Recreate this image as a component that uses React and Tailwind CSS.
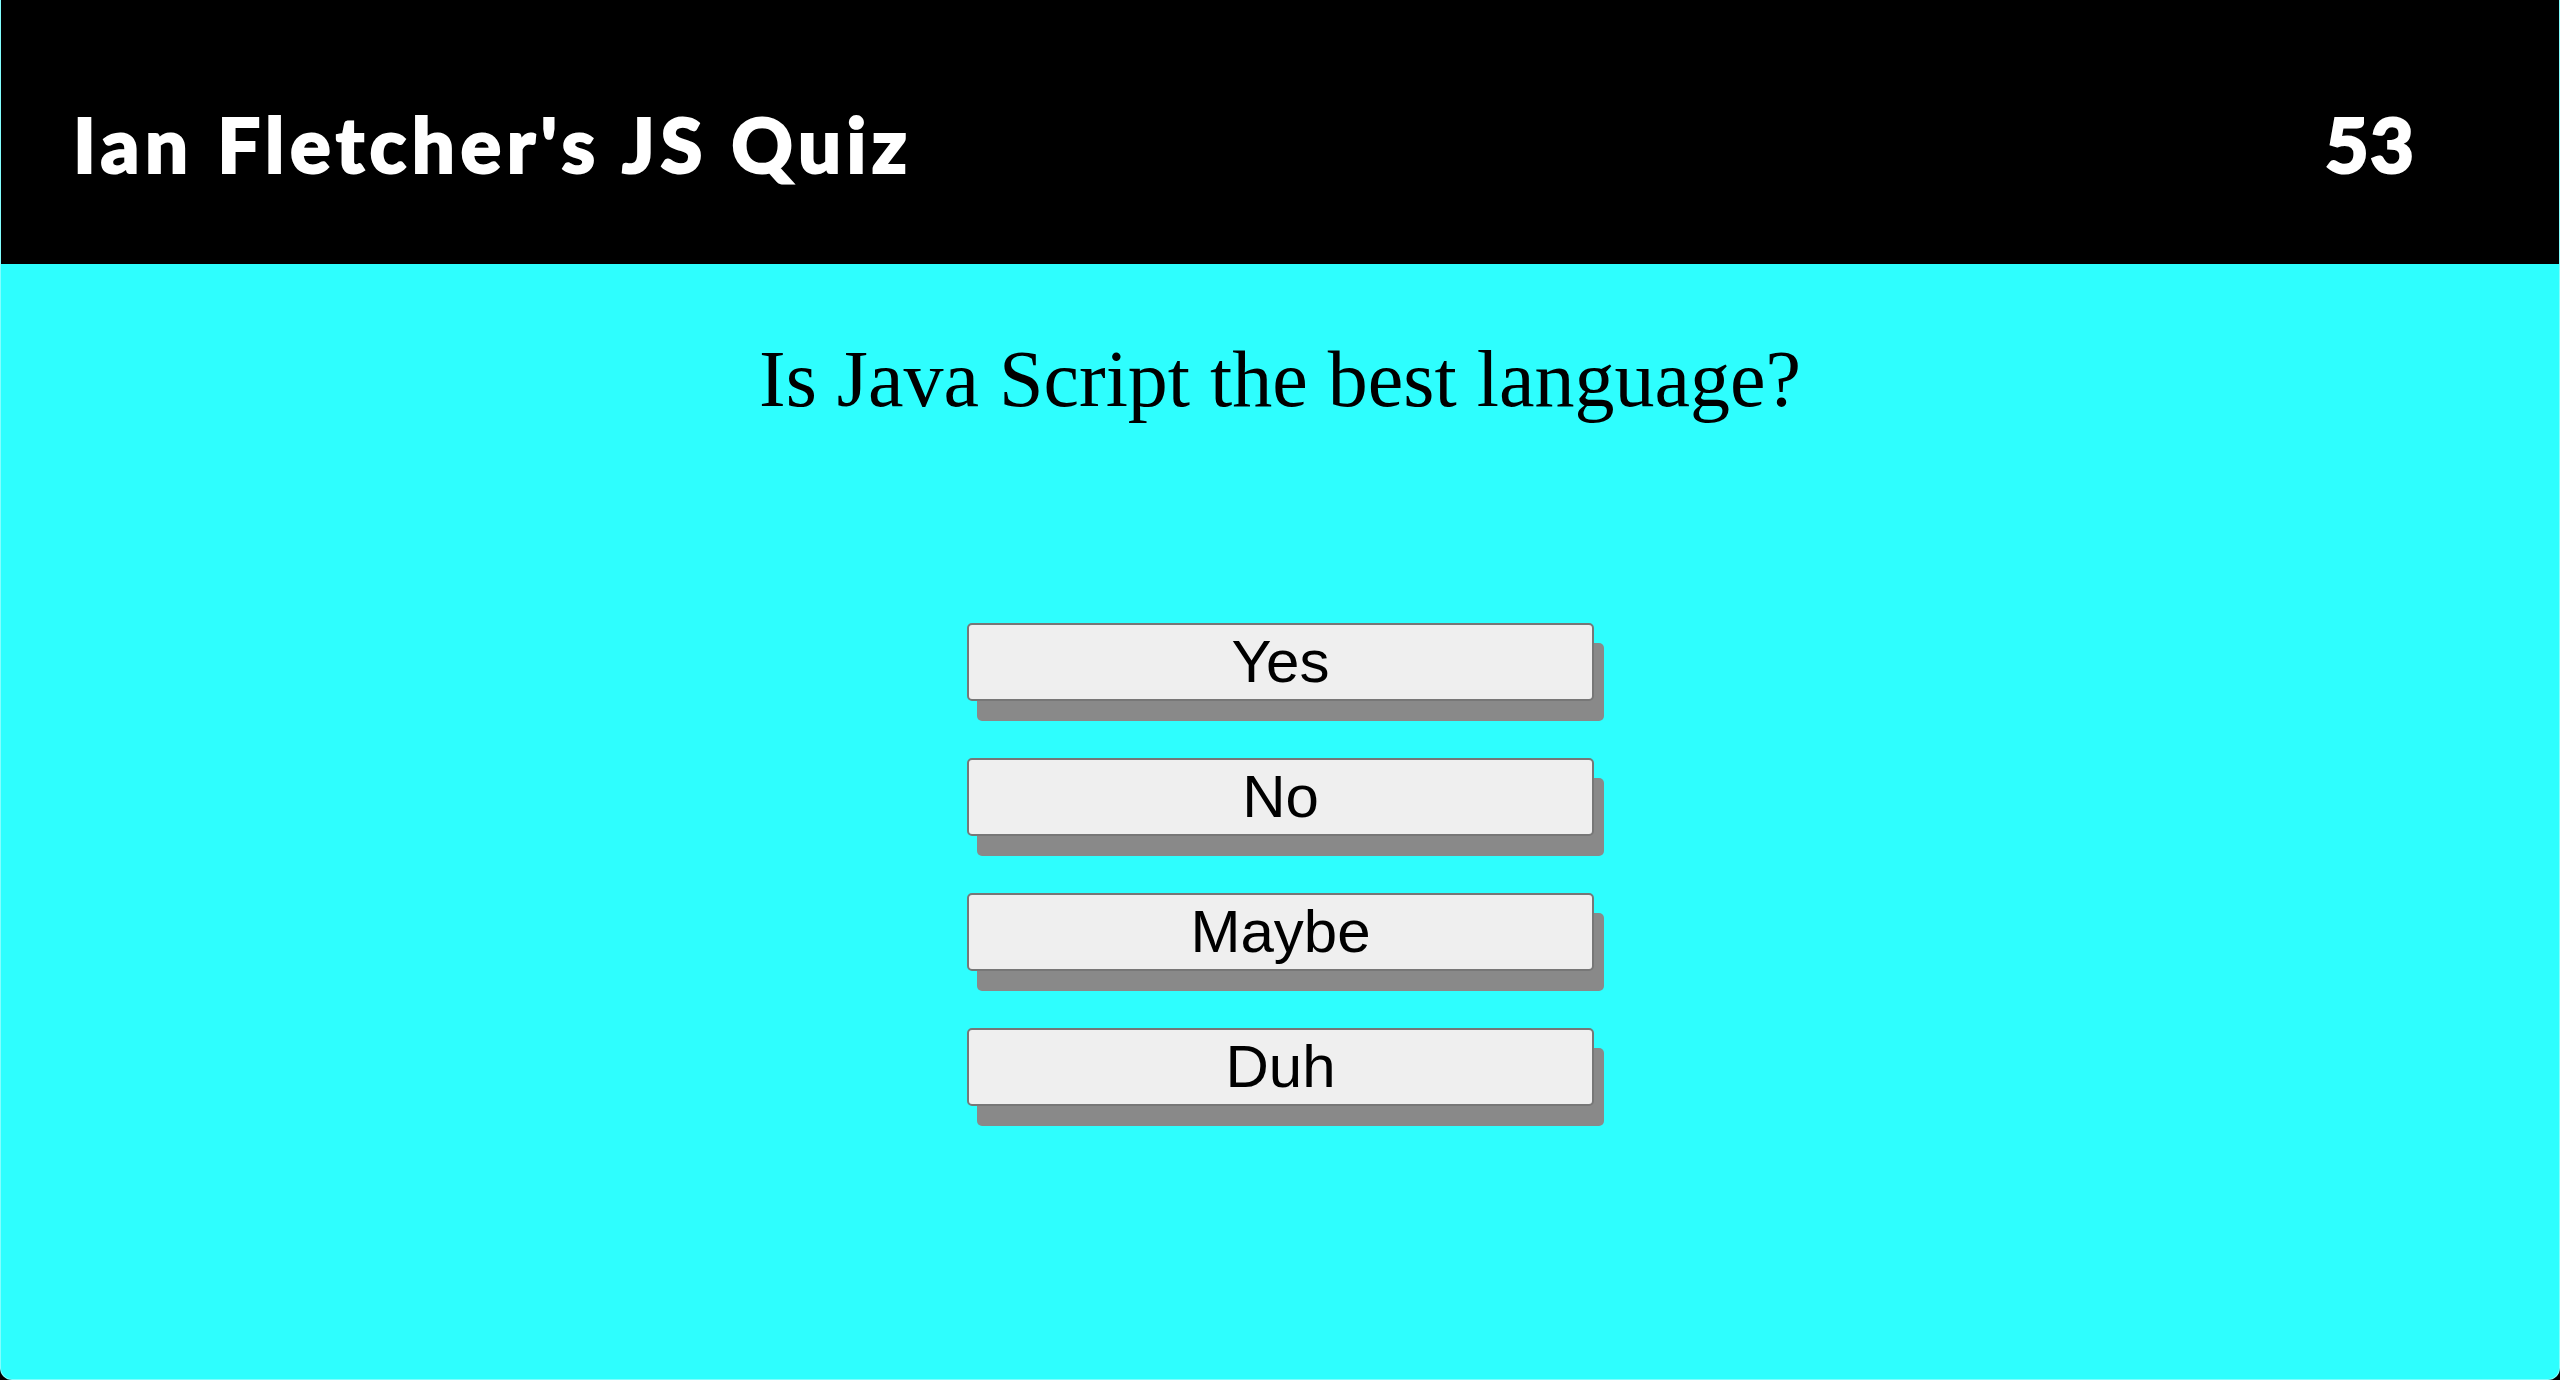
import React from "react";

const answers = ["Yes", "No", "Maybe", "Duh"];

export default function App() {
    return (
        <div className="w-[2560px] h-[1380px] bg-black">
            <div className="h-full flex flex-col overflow-hidden rounded-b-[12px] border-x border-b border-white/40 bg-[#2efefe]">
                {/* HEADER */}
                <div className="h-[264px] shrink-0 bg-black flex items-start justify-between pt-[106px] pl-[72px] pr-[144px] text-white font-black text-[76px] leading-[75px] font-['Lato',sans-serif] [-webkit-text-stroke:2px_white]">
                    <span className="tracking-[5.5px]">Ian Fletcher's JS Quiz</span>
                    <span className="tracking-[1px]">53</span>
                </div>

                {/* QUESTION */}
                <div className="mt-[75px] text-center text-black text-[80px] leading-[80px] font-['Liberation_Serif',serif]">
                    Is Java Script the best language?
                </div>

                {/* ANSWERS */}
                <div className="mt-[204px] flex flex-col items-center gap-[57px]">
                    {answers.map((a) => (
                        <button
                            key={a}
                            className="w-[627px] h-[78px] ml-[1px] flex items-center justify-center rounded-[5px] border-2 border-[#777] bg-[#efefef] text-black text-[60px] leading-none font-['Liberation_Sans',sans-serif] shadow-[10px_20px_0_#898989]"
                        >
                            {a}
                        </button>
                    ))}
                </div>
            </div>
        </div>
    );
}
